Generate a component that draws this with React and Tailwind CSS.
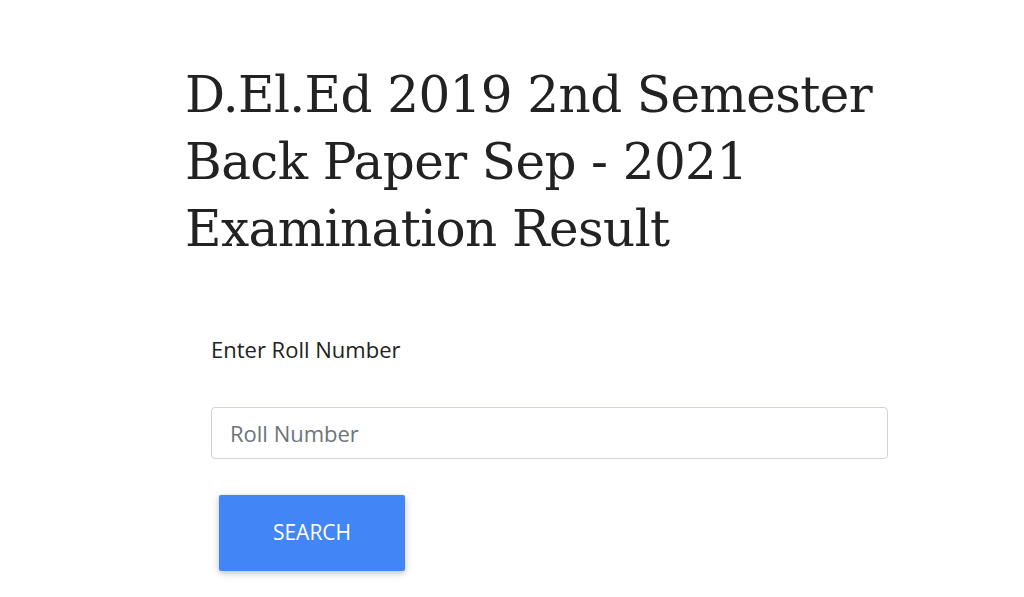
export default function App() {
  return (
    <div className="min-h-[597px] w-full bg-white" style={{ fontFamily: '"Open Sans", sans-serif' }}>
      <div className="pl-[185px] pt-[62px]">
        <h1
          className="text-[50px] leading-[67px] tracking-[-0.6px] text-[#222222] font-normal"
          style={{ fontFamily: '"DejaVu Serif", serif' }}
        >
          D.El.Ed 2019 2nd Semester
          <br />
          Back Paper Sep - 2021
          <br />
          Examination Result
        </h1>
        <div className="pl-[26px] pt-[71px] w-[703px]">
          <label className="block text-[22px] leading-[30px] text-[#222222]">Enter Roll Number</label>
          <input
            type="text"
            placeholder="Roll Number"
            className="mt-[43px] block w-[677px] h-[52px] rounded-[4px] border border-[#ced4da] px-[18px] text-[22px] text-[#495057] placeholder:text-[#6c757d] outline-none"
          />
          <button className="mt-[36px] ml-[8px] w-[186px] h-[76px] rounded-[2px] bg-[#4285f4] text-white text-[21px] uppercase shadow-[0_2px_5px_0_rgba(0,0,0,0.16),0_2px_10px_0_rgba(0,0,0,0.12)]">
            Search
          </button>
        </div>
      </div>
    </div>
  );
}
